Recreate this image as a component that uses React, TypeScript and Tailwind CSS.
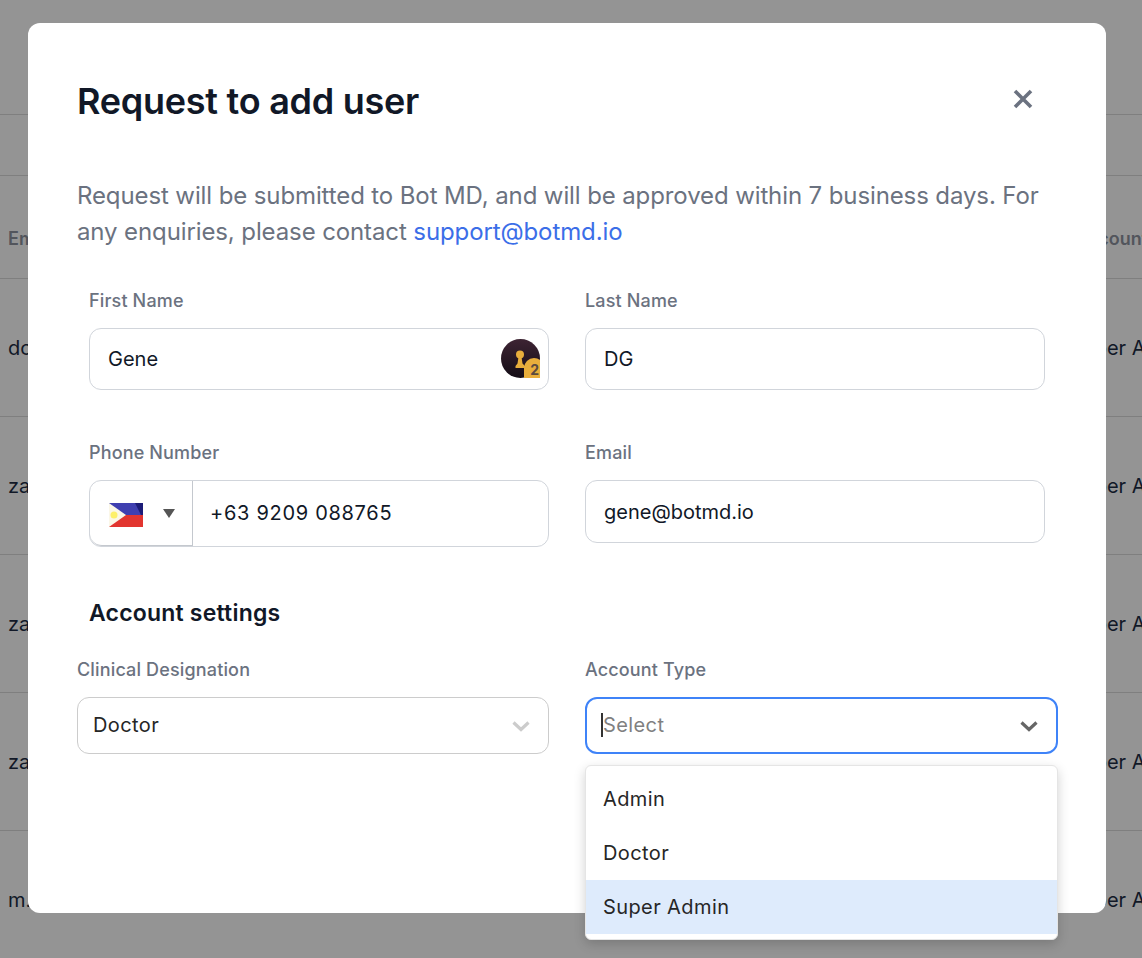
const rows = ["doctor@botmd.io", "zaldy@botmd.io", "zach@botmd.io", "zara@botmd.io", "m.lee@botmd.io"];

const accountTypes = ["Admin", "Doctor", "Super Admin"];

function Chevron({ className }: { className: string }) {
  return (
    <svg viewBox="0 0 20 12" fill="none" className={className}>
      <path d="M2.5 2.5 10 9.5l7.5-7" stroke="currentColor" strokeWidth="3.2" />
    </svg>
  );
}

function Label({ children, className = "" }: { children: string; className?: string }) {
  return (
    <label className={`block text-[18px] leading-[24px] font-medium tracking-[0.15px] text-[#6b7280] ${className}`}>
      {children}
    </label>
  );
}

function TextField({ value, height = "h-[62px]" }: { value: string; height?: string }) {
  return (
    <div className={`flex ${height} items-center rounded-xl border border-[#d1d5db] px-[18px] text-[20px] text-[#111827]`}>
      {value}
    </div>
  );
}

function Avatar() {
  return (
    <div className="relative h-[39px] w-[39px]">
      <svg viewBox="0 0 39 39" className="h-[39px] w-[39px]">
        <defs>
          <linearGradient id="avatarBg" x1="0" y1="0" x2="0" y2="1">
            <stop offset="0" stopColor="#3d2433" />
            <stop offset="1" stopColor="#140d16" />
          </linearGradient>
        </defs>
        <circle cx="19.5" cy="19.5" r="19.5" fill="url(#avatarBg)" />
        <circle cx="19" cy="15.5" r="4" fill="#e8ae3c" />
        <path d="M17.5 18h3l1 6.5 2.5 2.5v2H14.5v-2l2-2.5z" fill="#e8ae3c" />
        <circle cx="33" cy="29" r="10" fill="#e8ae3c" />
        <rect x="23" y="29" width="16" height="10" fill="#e8ae3c" />
      </svg>
      <span className="absolute right-[1px] bottom-[-1px] text-[14px] leading-[18px] font-bold text-[#5a4a40]">2</span>
    </div>
  );
}

function Flag() {
  return (
    <svg viewBox="0 0 34 24" className="mt-[3px] h-[24px] w-[34px] blur-[0.4px]">
      <rect width="34" height="12" fill="#3f3fb0" />
      <path d="M26 0h8v12h-2z" fill="#1c1c78" />
      <rect y="12" width="34" height="12" fill="#e2352f" />
      <path d="M0 0 17 12 0 24z" fill="#fbf7e8" />
      <circle cx="5" cy="12" r="3.5" fill="#fdf06a" />
    </svg>
  );
}

export default function App() {
  return (
    <div className="relative h-[958px] w-[1142px] overflow-hidden bg-[#949494] font-['Inter',sans-serif]">
      <div className="h-[115px] border-b border-[#7f7f7f]" />
      <div className="h-[61px] border-b border-[#7f7f7f]" />
      <div className="flex h-[103px] items-center justify-between border-b border-[#7f7f7f] pt-[22px] pl-[8px] text-[18px] font-semibold text-[#52555c]">
        <span>Email</span>
        <span className="w-[67px] overflow-hidden whitespace-nowrap">Account Type</span>
      </div>
      {rows.map((row) => (
        <div
          key={row}
          className="flex h-[138px] items-center justify-between border-b border-[#7f7f7f] pl-[8px] text-[20px] text-[#111827] last:border-b-0"
        >
          <span>{row}</span>
          <span className="w-[72px] overflow-hidden whitespace-nowrap">Super Admin</span>
        </div>
      ))}

      <div className="absolute top-[23px] left-[28px] h-[890px] w-[1078px] rounded-xl bg-white px-[49px] pt-[55px]">
        <div className="flex items-start justify-between">
          <h2 className="text-[36px] leading-[46px] font-semibold tracking-[-0.26px] text-[#111827]">
            Request to add user
          </h2>
          <svg viewBox="0 0 20 20" className="mt-[11px] mr-[24px] h-[20px] w-[20px] text-[#6b7280]" fill="none">
            <path d="M2 2l16 16M18 2 2 18" stroke="currentColor" strokeWidth="3.6" />
          </svg>
        </div>

        <p className="mt-[54px] text-[24px] leading-[36px] tracking-[-0.11px] text-[#6b7280]">
          Request will be submitted to Bot MD, and will be approved within 7 business days. For any enquiries, please
          contact <span className="text-[#3b6ee8]">support@botmd.io</span>
        </p>

        <div className="mt-[39px] grid grid-cols-[460px_460px] gap-x-[36px] px-[12px]">
          <div>
            <Label>First Name</Label>
            <div className="relative mt-[15px]">
              <TextField value="Gene" />
              <div className="absolute top-[11px] right-[9px]">
                <Avatar />
              </div>
            </div>
          </div>
          <div>
            <Label>Last Name</Label>
            <div className="mt-[15px]">
              <TextField value="DG" />
            </div>
          </div>

          <div className="mt-[51px]">
            <Label>Phone Number</Label>
            <div className="mt-[15px] flex h-[67px] rounded-xl border border-[#d1d5db] text-[#111827]">
              <div className="flex w-[103px] items-center gap-[20px] rounded-l-xl border-r border-b border-[#c4c8ce] pl-[19px]">
                <Flag />
                <div className="h-0 w-0 border-x-[6px] border-t-[9px] border-x-transparent border-t-[#555555]" />
              </div>
              <div className="flex items-center pb-[2px] pl-[17px] text-[20px] tracking-[0.7px]">+63 9209 088765</div>
            </div>
          </div>
          <div className="mt-[51px]">
            <Label>Email</Label>
            <div className="mt-[15px]">
              <TextField value="gene@botmd.io" height="h-[63px]" />
            </div>
          </div>
        </div>

        <h3 className="mt-[50px] px-[12px] text-[23px] leading-[32px] font-semibold tracking-[0.2px] text-[#111827]">
          Account settings
        </h3>

        <div className="mt-[29px] grid grid-cols-[472px_473px] gap-x-[36px]">
          <div>
            <Label>Clinical Designation</Label>
            <div className="mt-[15px] flex h-[57px] items-center justify-between rounded-xl border border-[#cccccc] pr-[17px] pb-[2px] pl-[15px] text-[20px] tracking-[0.4px] text-[#262626]">
              Doctor
              <Chevron className="mt-[2px] h-[12px] w-[20px] text-[#cccccc]" />
            </div>
          </div>
          <div className="relative">
            <Label>Account Type</Label>
            <div className="mt-[15px] flex h-[57px] items-center justify-between rounded-xl border-2 border-[#3f83f8] pr-[17px] pb-[2px] pl-[14px] text-[20px] tracking-[0.4px] text-[#808080]">
              <span className="border-l-2 border-[#333333] leading-[24px]">Select</span>
              <Chevron className="mt-[2px] h-[12px] w-[20px] text-[#666666]" />
            </div>
            <div className="absolute top-[107px] right-0 left-0 rounded-md border border-[#e5e5e5] bg-white pt-[6px] pb-[5px] text-[20px] tracking-[0.4px] text-[#262626] shadow-[0_4px_12px_rgba(0,0,0,0.18)]">
              {accountTypes.map((item) => (
                <div
                  key={item}
                  className={`flex h-[54px] items-center px-[17px] ${item === "Super Admin" ? "bg-[#deebfc]" : ""}`}
                >
                  {item}
                </div>
              ))}
            </div>
          </div>
        </div>
      </div>
    </div>
  );
}
